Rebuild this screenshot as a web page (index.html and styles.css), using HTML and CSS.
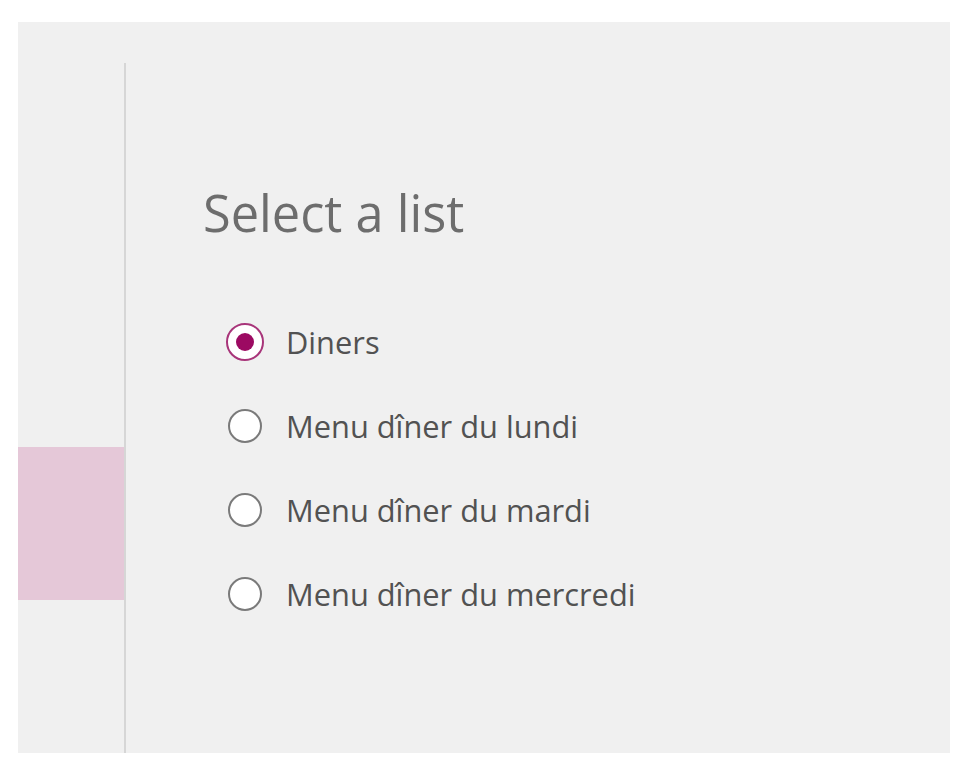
FILE: index.html
```html
<!DOCTYPE html>
<html lang="en">
<head>
<meta charset="utf-8">
<title>Select a list</title>
<link rel="stylesheet" href="styles.css">
</head>
<body>
<div class="panel">
  <div class="sidebar">
    <div class="sidebar-active"></div>
  </div>
  <div class="divider"></div>
  <main class="content">
    <h1 class="title">Select a list</h1>
    <ul class="options">
      <li class="option">
        <span class="radio-slot"><span class="radio radio-checked"><span class="radio-dot"></span></span></span>
        <span class="option-label">Diners</span>
      </li>
      <li class="option">
        <span class="radio-slot"><span class="radio"></span></span>
        <span class="option-label">Menu dîner du lundi</span>
      </li>
      <li class="option">
        <span class="radio-slot"><span class="radio"></span></span>
        <span class="option-label">Menu dîner du mardi</span>
      </li>
      <li class="option">
        <span class="radio-slot"><span class="radio"></span></span>
        <span class="option-label">Menu dîner du mercredi</span>
      </li>
    </ul>
  </main>
</div>
</body>
</html>
```
FILE: styles.css
```css
html, body {
  margin: 0;
  padding: 0;
  background: #ffffff;
}

body {
  font-family: "Open Sans", "Noto Sans", "DejaVu Sans", sans-serif;
}

.panel {
  display: flex;
  margin: 22px 0 0 18px;
  width: 932px;
  height: 731px;
  background: #f0f0f0;
}

.sidebar {
  width: 106px;
  flex: none;
  padding-top: 425px;
  box-sizing: border-box;
}

.sidebar-active {
  height: 153px;
  background: #e5c8d8;
}

.divider {
  width: 2px;
  flex: none;
  margin-top: 41px;
  background: #d6d6d6;
}

.content {
  flex: 1;
  padding: 161px 0 0 77px;
}

.title {
  margin: 0;
  font-size: 50.5px;
  line-height: 60px;
  font-weight: 400;
  color: #6d6d6d;
}

.options {
  list-style: none;
  margin: 57px 0 0 23px;
  padding: 0;
}

.option {
  display: flex;
  align-items: center;
  height: 84px;
}

.radio-slot {
  width: 38px;
  height: 38px;
  display: flex;
  align-items: center;
  justify-content: center;
  margin-right: 22px;
  flex: none;
}

.radio {
  width: 34px;
  height: 34px;
  box-sizing: border-box;
  border: 2px solid #7a7a7a;
  border-radius: 50%;
  background: #ffffff;
  display: flex;
  align-items: center;
  justify-content: center;
}

.radio-checked {
  width: 38px;
  height: 38px;
  border: 2px solid #a8357a;
}

.radio-dot {
  width: 18px;
  height: 18px;
  border-radius: 50%;
  background: #9c0a62;
}

.option-label {
  font-size: 30.8px;
  line-height: 40px;
  color: #525252;
}
```
